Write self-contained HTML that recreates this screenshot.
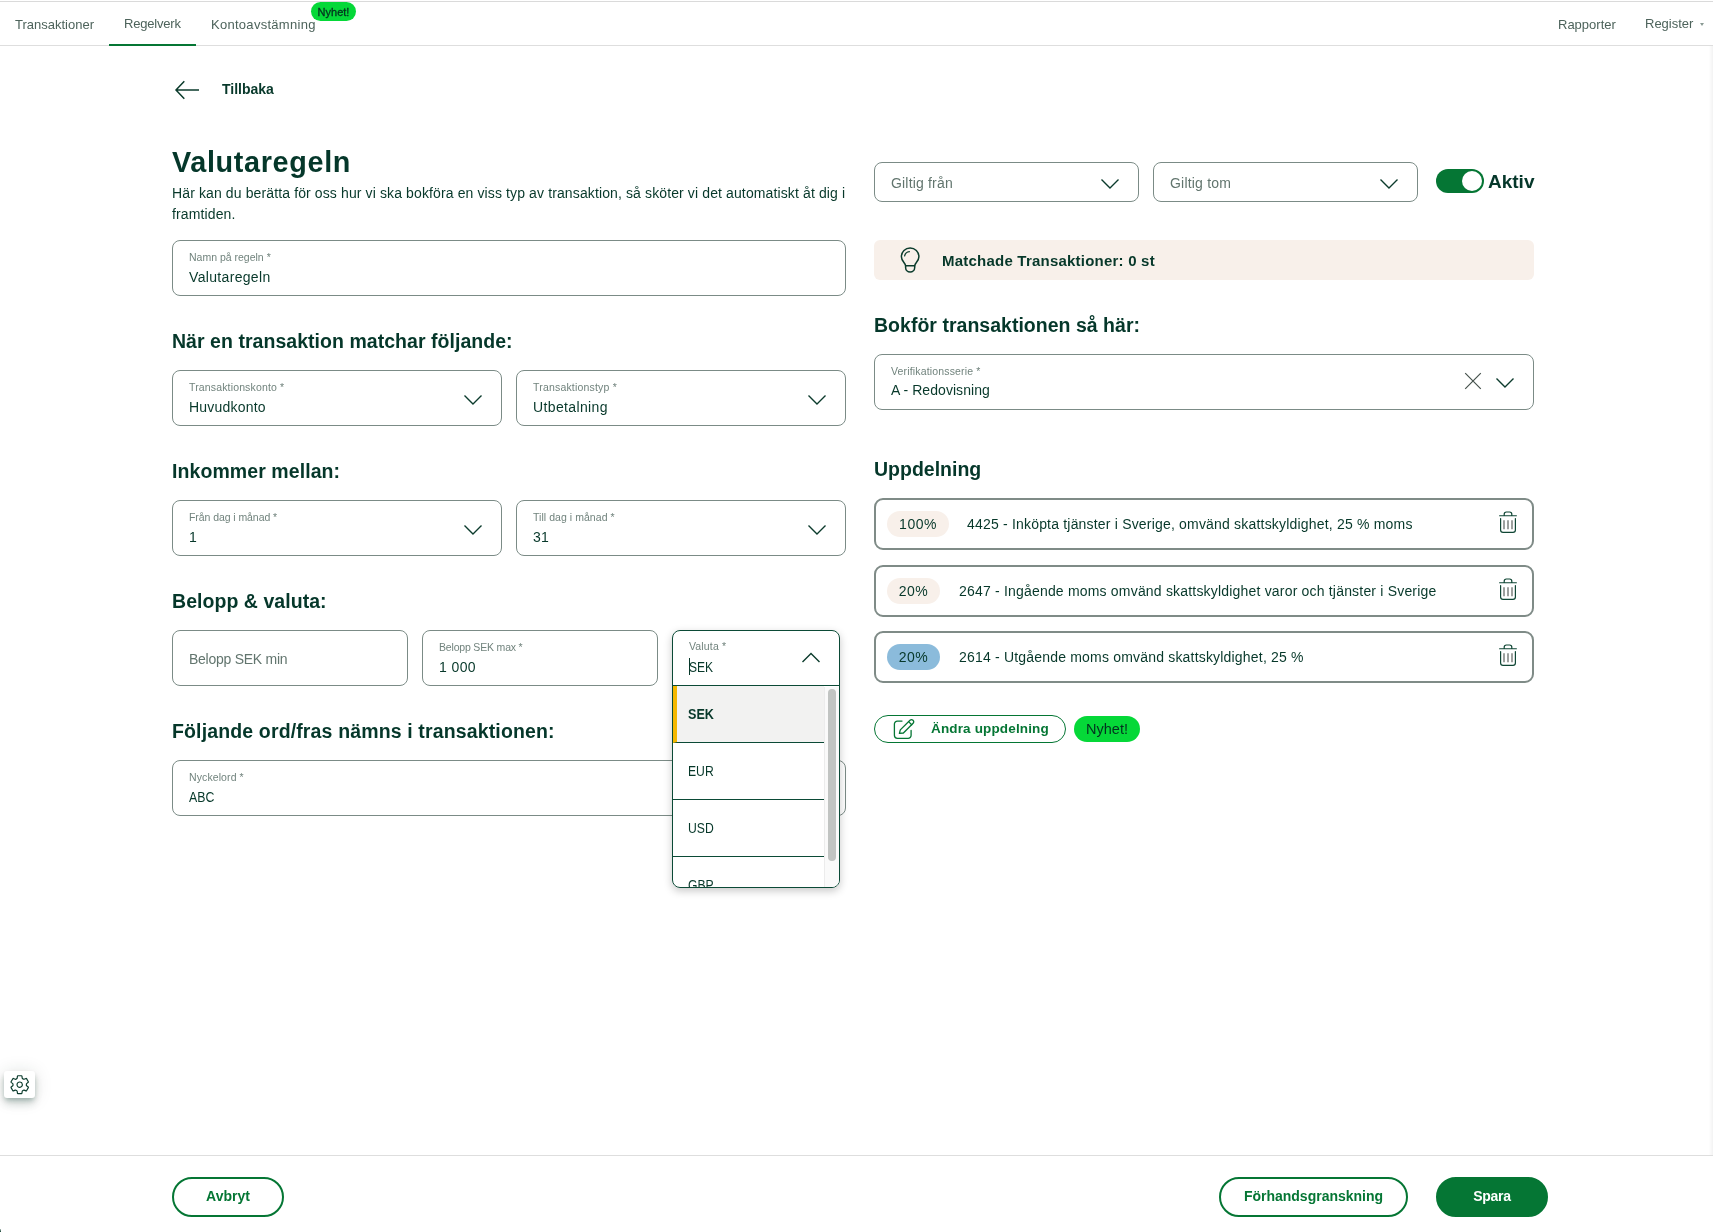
<!DOCTYPE html>
<html lang="sv">
<head>
<meta charset="utf-8">
<title>Valutaregeln</title>
<style>
*{box-sizing:border-box;margin:0;padding:0}
html,body{width:1713px;height:1232px;overflow:hidden;background:#fff}
body{position:relative;font-family:"Liberation Sans",sans-serif;color:#07382a;font-size:14px}
.abs{position:absolute;white-space:nowrap}
#topline{left:0;top:1px;width:1713px;height:1px;background:#dadada}
#nav{left:0;top:2px;width:1713px;height:44px;border-bottom:1px solid #dedede;background:#fff}
.tab{position:absolute;top:1px;height:44px;line-height:44px;font-size:13px;color:#4d635b;white-space:nowrap}
#tab2:after{content:"";position:absolute;left:-15px;right:-15px;bottom:0;height:2px;background:#057634}
.badge{position:absolute;background:#05d838;color:#07382a;text-align:center;white-space:nowrap}
h1{position:absolute;left:172px;top:145px;font-size:28.800px;line-height:34px;font-weight:bold;color:#05372a;white-space:nowrap;letter-spacing:.650px}
h2{position:absolute;font-size:19.500px;line-height:24px;font-weight:bold;color:#05372a;white-space:nowrap}
.field{position:absolute;height:56px;border:1px solid #7b8b86;border-radius:8px;background:#fff}
.field .lbl{position:absolute;left:16px;top:9.500px;font-size:10.500px;line-height:12px;color:#71837d;white-space:nowrap}
.field .val{position:absolute;left:16px;top:27px;font-size:14px;line-height:18px;color:#07382a;white-space:nowrap}
.field .ph{position:absolute;left:16px;top:19px;font-size:14px;line-height:18px;color:#62756e;white-space:nowrap}
.field svg.chev{position:absolute;right:19px;top:24px}
.field.small{height:40px}
.field.small .ph{top:11px}
.field.small svg.chev{top:16px;right:19px}
.field.ver svg.chev{top:23px}
.field.ver .val{top:26px}
.row{position:absolute;left:874px;width:660px;height:52px;border:2px solid #7f8b87;border-radius:9px;background:#fff}
.row .pct{position:absolute;left:11px;top:11px;height:26px;line-height:26px;border-radius:13px;background:#f8f0ea;font-size:14px;text-align:center;color:#07382a;letter-spacing:.500px}
.row .txt{position:absolute;top:15px;font-size:14px;line-height:18px;white-space:nowrap;color:#07382a;letter-spacing:.190px}
.row svg{position:absolute;left:623px;top:10.500px}
.btn{position:absolute;height:40px;border-radius:20px;border:2px solid #057634;color:#057634;font-weight:bold;font-size:14px;line-height:34px;text-align:center;background:#fff;white-space:nowrap}
.btn.fill{background:#057634;color:#fff}
</style>
</head>
<body>
<div id="page" style="position:absolute;left:0;top:0;width:1713px;height:1232px;will-change:transform">
<div id="topline" class="abs"></div>
<div id="nav" class="abs">
  <div class="tab" id="tab1" style="left:15px">Transaktioner</div>
  <div class="tab" id="tab2" style="left:124px;top:0;letter-spacing:-.200px">Regelverk</div>
  <div class="tab" id="tab3" style="left:211px;letter-spacing:.280px">Kontoavstämning</div>
  <div class="badge" id="navbadge" style="left:311px;top:0;width:45px;height:19px;line-height:21px;font-size:11px;border-radius:9.500px;color:#04301f;-webkit-text-stroke:.300px #04301f">Nyhet!</div>
  <div class="tab" id="tab4" style="left:1558px">Rapporter</div>
  <div class="tab" id="tab5" style="left:1645px;top:0">Register</div>
  <div class="abs" id="caret" style="left:1700px;top:21px;width:0;height:0;border-left:2px solid transparent;border-right:2px solid transparent;border-top:3px solid #8a9a94"></div>
</div>
<svg class="abs" id="backarrow" style="left:174px;top:80px" width="26" height="20" viewBox="0 0 26 20" fill="none" stroke="#0b3b2c" stroke-width="1.500"><path d="M10.300 1.200L2 10l8.300 8.800M2 10H25"/></svg>
<div class="abs" id="back" style="left:222px;top:80px;font-size:14px;line-height:18px;font-weight:bold;color:#07382a">Tillbaka</div>
<h1 id="title">Valutaregeln</h1>
<div class="abs" id="desc" style="left:172px;top:183px;width:690px;white-space:normal;font-size:14px;line-height:21px;color:#07382a;letter-spacing:.120px">Här kan du berätta för oss hur vi ska bokföra en viss typ av transaktion, så sköter vi det automatiskt åt dig i framtiden.</div>
<div class="field" id="f_name" style="left:172px;top:240px;width:674px"><span class="lbl" style="letter-spacing:0px">Namn på regeln *</span><span class="val" style="letter-spacing:0.33px">Valutaregeln</span></div>
<h2 id="h_match" style="left:172px;top:329px;letter-spacing:.040px">När en transaktion matchar följande:</h2>
<div class="field" id="f_konto" style="left:172px;top:370px;width:330px"><span class="lbl" style="letter-spacing:0.15px">Transaktionskonto *</span><span class="val" style="letter-spacing:0.2px">Huvudkonto</span><svg class="chev" width="18" height="11" viewBox="0 0 18 11" fill="none" stroke="#0b3b2c" stroke-width="1.4"><path d="M0.500 0.500L9 9l8.500-8.500"/></svg></div>
<div class="field" id="f_typ" style="left:516px;top:370px;width:330px"><span class="lbl" style="letter-spacing:0.19px">Transaktionstyp *</span><span class="val" style="letter-spacing:0.37px">Utbetalning</span><svg class="chev" width="18" height="11" viewBox="0 0 18 11" fill="none" stroke="#0b3b2c" stroke-width="1.4"><path d="M0.500 0.500L9 9l8.500-8.500"/></svg></div>
<h2 id="h_ink" style="left:172px;top:459px;letter-spacing:.080px">Inkommer mellan:</h2>
<div class="field" id="f_from" style="left:172px;top:500px;width:330px"><span class="lbl" style="letter-spacing:-0.07px">Från dag i månad *</span><span class="val" style="letter-spacing:0px">1</span><svg class="chev" width="18" height="11" viewBox="0 0 18 11" fill="none" stroke="#0b3b2c" stroke-width="1.4"><path d="M0.500 0.500L9 9l8.500-8.500"/></svg></div>
<div class="field" id="f_to" style="left:516px;top:500px;width:330px"><span class="lbl" style="letter-spacing:0.05px">Till dag i månad *</span><span class="val" style="letter-spacing:0.3px">31</span><svg class="chev" width="18" height="11" viewBox="0 0 18 11" fill="none" stroke="#0b3b2c" stroke-width="1.4"><path d="M0.500 0.500L9 9l8.500-8.500"/></svg></div>
<h2 id="h_bel" style="left:172px;top:589px;letter-spacing:.050px">Belopp &amp; valuta:</h2>
<div class="field" id="f_min" style="left:172px;top:630px;width:236px"><span class="ph" style="letter-spacing:-.260px">Belopp SEK min</span></div>
<div class="field" id="f_max" style="left:422px;top:630px;width:236px"><span class="lbl" style="letter-spacing:-0.18px">Belopp SEK max *</span><span class="val" style="letter-spacing:0.4px">1 000</span></div>
<h2 id="h_ord" style="left:172px;top:719px;letter-spacing:.140px">Följande ord/fras nämns i transaktionen:</h2>
<div class="field" id="f_key" style="left:172px;top:760px;width:674px"><span class="lbl" style="letter-spacing:0.1px">Nyckelord *</span><span class="val" style="letter-spacing:0px"><span style="display:inline-block;transform:scaleX(.880);transform-origin:0 50%">ABC</span></span></div>
<div class="abs" id="ddshadow" style="left:672px;top:630px;width:168px;height:258px;border-radius:8px;box-shadow:0 3px 8px rgba(0,0,0,.220)"></div>
<div class="abs" id="dd" style="left:672px;top:630px;width:168px;height:258px;border:1.500px solid #0b4a36;border-radius:8px;background:#fff;overflow:hidden">
  <span class="abs" style="left:16px;top:9px;font-size:10.500px;line-height:12px;color:#71837d;letter-spacing:.150px">Valuta *</span>
  <span class="abs" style="left:15.500px;top:27px;line-height:18px;color:#07382a;font-size:14px;transform:scaleX(.860);transform-origin:0 50%">SEK</span>
  <div class="abs" id="cursor" style="left:16px;top:27px;width:1px;height:17px;background:#07382a"></div>
  <svg class="abs" style="left:128.5px;top:20.5px" width="18" height="11" viewBox="0 0 18 11" fill="none" stroke="#0b3b2c" stroke-width="1.4"><path d="M0.500 10L9 1.500l8.500 8.500"/></svg>
  <div class="abs" id="ddline" style="left:0;top:53.500px;width:168px;height:1.200px;background:#0b4a36"></div>
  <div class="abs" id="opt1" style="left:0;top:55px;width:151px;height:57px;background:#f2f2f1;border-left:4px solid #f5b800;border-bottom:1.500px solid #0b4a36"><span class="abs" style="left:11px;top:19px;font-weight:bold;line-height:18px;font-size:14px;transform:scaleX(.900);transform-origin:0 50%">SEK</span></div>
  <div class="abs" id="opt2" style="left:0;top:112px;width:151px;height:57px;border-bottom:1.500px solid #0b4a36"><span class="abs" style="left:15px;top:19px;line-height:18px;font-size:14.500px;transform:scaleX(.840);transform-origin:0 50%">EUR</span></div>
  <div class="abs" id="opt3" style="left:0;top:169px;width:151px;height:57px;border-bottom:1.500px solid #0b4a36"><span class="abs" style="left:15px;top:19px;line-height:18px;font-size:14.500px;transform:scaleX(.840);transform-origin:0 50%">USD</span></div>
  <div class="abs" id="opt4" style="left:0;top:226px;width:151px;height:57px"><span class="abs" style="left:15px;top:19px;line-height:18px;font-size:14.500px;transform:scaleX(.840);transform-origin:0 50%">GBP</span></div>
  <div class="abs" id="sbtrack" style="left:151px;top:56px;width:16px;height:202px;background:#fafafa;border-left:1px solid #ececec"></div>
  <div class="abs" id="sbthumb" style="left:155px;top:58px;width:8px;height:172px;border-radius:4px;background:#c1c4c2"></div>
</div>
<div class="field small" id="f_gf" style="left:874px;top:162px;width:265px"><span class="ph" style="letter-spacing:.180px">Giltig från</span><svg class="chev" width="18" height="11" viewBox="0 0 18 11" fill="none" stroke="#0b3b2c" stroke-width="1.4"><path d="M0.500 0.500L9 9l8.500-8.500"/></svg></div>
<div class="field small" id="f_gt" style="left:1153px;top:162px;width:265px"><span class="ph" style="letter-spacing:.200px">Giltig tom</span><svg class="chev" width="18" height="11" viewBox="0 0 18 11" fill="none" stroke="#0b3b2c" stroke-width="1.4"><path d="M0.500 0.500L9 9l8.500-8.500"/></svg></div>
<div class="abs" id="toggle" style="left:1436px;top:169px;width:48px;height:24px;border-radius:12px;background:#057634"><div class="abs" style="left:26px;top:2px;width:20px;height:20px;border-radius:50%;background:#fff"></div></div>
<div class="abs" id="aktiv" style="left:1488px;top:170px;font-size:19px;line-height:24px;font-weight:bold;color:#05372a">Aktiv</div>
<div class="abs" id="matchbox" style="left:874px;top:240px;width:660px;height:40px;border-radius:6px;background:#f8f0ea"></div>
<svg class="abs" id="bulb" style="left:899px;top:246px" width="22" height="28" viewBox="0 0 22 28" fill="none" stroke="#0b3b2c" stroke-width="1.500" stroke-linecap="round" stroke-linejoin="round"><path d="M6.600 19.800C6.600 17 2.400 15.500 2.400 10.750A8.750 8.750 0 0 1 19.900 10.750C19.900 15.500 15.700 17 15.700 19.800Z"/><path d="M6.600 19.800V21.500a4.550 4.550 0 0 0 9.100 0V19.800"/><path d="M5.600 10A5.500 5.500 0 0 1 10.400 5.700" stroke-width="1.200"/></svg>
<div class="abs" id="matchtxt" style="left:942px;top:252px;font-size:15px;line-height:18px;font-weight:bold;color:#07382a;letter-spacing:.220px">Matchade Transaktioner: 0 st</div>
<h2 id="h_bok" style="left:874px;top:313px;letter-spacing:.020px">Bokför transaktionen så här:</h2>
<div class="field ver" id="f_ver" style="left:874px;top:354px;width:660px"><span class="lbl" style="letter-spacing:0.16px">Verifikationsserie *</span><span class="val" style="letter-spacing:0.05px">A - Redovisning</span><svg class="abs" style="left:589px;top:17px" width="18" height="18" viewBox="0 0 18 18" fill="none" stroke="#46524d" stroke-width="1.200"><path d="M1.200 1.200l15.600 15.600M16.800 1.200L1.200 16.800"/></svg><svg class="chev" width="18" height="11" viewBox="0 0 18 11" fill="none" stroke="#0b3b2c" stroke-width="1.4"><path d="M0.500 0.500L9 9l8.500-8.500"/></svg></div>
<h2 id="h_upp" style="left:874px;top:457px;letter-spacing:0">Uppdelning</h2>
<div class="row" id="row1" style="top:498px"><span class="pct" style="width:62px">100%</span><span class="txt" style="left:91px">4425 - Inköpta tjänster i Sverige, omvänd skattskyldighet, 25 % moms</span><svg width="18" height="23" viewBox="0 0 18 23" fill="none" stroke="#0f4634" stroke-width="1.2" stroke-linecap="round" stroke-linejoin="round"><path d="M0.600 4.750H17.400M5.200 4.750V3.200a2.200 2.200 0 0 1 2.200-2.200h3.200a2.200 2.200 0 0 1 2.200 2.200V4.750"/><path d="M1.600 7.600V19a2.400 2.400 0 0 0 2.400 2.400H14a2.400 2.400 0 0 0 2.400-2.400V7.600"/><path d="M5 9.300V18.200M9 9.300V18.200M13 9.300V18.200" stroke="#6a6e6c" stroke-width="1.300" stroke-linecap="butt"/></svg></div>
<div class="row" id="row2" style="top:565px"><span class="pct" style="width:53px">20%</span><span class="txt" style="left:83px">2647 - Ingående moms omvänd skattskyldighet varor och tjänster i Sverige</span><svg width="18" height="23" viewBox="0 0 18 23" fill="none" stroke="#0f4634" stroke-width="1.2" stroke-linecap="round" stroke-linejoin="round"><path d="M0.600 4.750H17.400M5.200 4.750V3.200a2.200 2.200 0 0 1 2.200-2.200h3.200a2.200 2.200 0 0 1 2.200 2.200V4.750"/><path d="M1.600 7.600V19a2.400 2.400 0 0 0 2.400 2.400H14a2.400 2.400 0 0 0 2.400-2.400V7.600"/><path d="M5 9.300V18.200M9 9.300V18.200M13 9.300V18.200" stroke="#6a6e6c" stroke-width="1.300" stroke-linecap="butt"/></svg></div>
<div class="row" id="row3" style="top:631px"><span class="pct" style="width:53px;background:#8bbbdb">20%</span><span class="txt" style="left:83px">2614 - Utgående moms omvänd skattskyldighet, 25 %</span><svg width="18" height="23" viewBox="0 0 18 23" fill="none" stroke="#0f4634" stroke-width="1.2" stroke-linecap="round" stroke-linejoin="round"><path d="M0.600 4.750H17.400M5.200 4.750V3.200a2.200 2.200 0 0 1 2.200-2.200h3.200a2.200 2.200 0 0 1 2.200 2.200V4.750"/><path d="M1.600 7.600V19a2.400 2.400 0 0 0 2.400 2.400H14a2.400 2.400 0 0 0 2.400-2.400V7.600"/><path d="M5 9.300V18.200M9 9.300V18.200M13 9.300V18.200" stroke="#6a6e6c" stroke-width="1.300" stroke-linecap="butt"/></svg></div>
<div class="abs" id="andra" style="left:874px;top:715px;width:192px;height:28px;border:1.200px solid #057634;border-radius:14px;background:#fff">
<svg class="abs" style="left:17.800px;top:.800px" width="22" height="24" viewBox="0 0 22 24" fill="none" stroke="#057634" stroke-width="1.300" stroke-linecap="round" stroke-linejoin="round"><path d="M9 4.100H4.400a3 3 0 0 0-3 3V18.300a3 3 0 0 0 3 3H15.100a3 3 0 0 0 3-3V13.500"/><path d="M6.400 16.400L7.300 12.900 17 3.200a2.200 2.200 0 0 1 3.100 3.100L10.400 16Z"/><path d="M15.600 4.600L18.700 7.700"/></svg>
<span class="abs" style="left:56px;top:4px;font-size:13.500px;line-height:18px;font-weight:bold;color:#057634;letter-spacing:.150px">Ändra uppdelning</span></div>
<div class="badge" id="nyhet2" style="left:1074px;top:716px;width:66px;height:26px;line-height:27px;font-size:14.500px;border-radius:13px;color:#04301f">Nyhet!</div>
<div class="abs" id="footline" style="left:0;top:1155px;width:1713px;height:1px;background:#dedede"></div>
<div class="btn" id="b_avbryt" style="left:172px;top:1177px;width:112px">Avbryt</div>
<div class="btn" id="b_prev" style="left:1219px;top:1177px;width:189px">Förhandsgranskning</div>
<div class="btn fill" id="b_spara" style="left:1436px;top:1177px;width:112px;letter-spacing:-.250px">Spara</div>
<div class="abs" id="gear" style="left:4px;top:1071px;width:31px;height:27px;border-radius:3px;background:#fff;box-shadow:0 3px 5px -1px rgba(7,56,42,.260),0 6px 10px 0 rgba(7,56,42,.160),0 1px 18px 0 rgba(7,56,42,.130)"><svg class="abs" style="left:4.900px;top:2.600px" width="21.400" height="21.400" viewBox="0 0 512 512" fill="none" stroke="#0b3b2c" stroke-width="28" stroke-linecap="round" stroke-linejoin="round"><path d="M262.290 192.310a64 64 0 1 0 57.400 57.400 64.130 64.130 0 0 0-57.400-57.400zM416.390 256a154.340 154.340 0 0 1-1.530 20.790l45.210 35.460a10.810 10.810 0 0 1 2.450 13.750l-42.770 74a10.810 10.810 0 0 1-13.140 4.590l-44.900-18.080a16.110 16.110 0 0 0-15.170 1.750A164.480 164.480 0 0 1 325 400.800a15.940 15.940 0 0 0-8.820 12.140l-6.730 47.890a11.080 11.080 0 0 1-10.680 9.170h-85.540a11.110 11.110 0 0 1-10.690-8.870l-6.720-47.820a16.070 16.070 0 0 0-9-12.220 155.300 155.300 0 0 1-21.460-12.570 16 16 0 0 0-15.110-1.710l-44.890 18.070a10.810 10.810 0 0 1-13.140-4.580l-42.770-74a10.800 10.800 0 0 1 2.450-13.750l38.210-30a16.050 16.050 0 0 0 6-14.080c-.360-4.170-.580-8.330-.580-12.500s.210-8.270.580-12.350a16 16 0 0 0-6.070-13.940l-38.190-30A10.810 10.810 0 0 1 49.480 186l42.770-74a10.810 10.810 0 0 1 13.140-4.590l44.900 18.080a16.110 16.110 0 0 0 15.170-1.750A164.480 164.480 0 0 1 187 111.200a15.940 15.940 0 0 0 8.820-12.140l6.730-47.890A11.080 11.080 0 0 1 213.230 42h85.540a11.110 11.110 0 0 1 10.690 8.870l6.720 47.820a16.070 16.070 0 0 0 9 12.220 155.300 155.300 0 0 1 21.460 12.570 16 16 0 0 0 15.110 1.710l44.890-18.070a10.810 10.810 0 0 1 13.140 4.580l42.770 74a10.800 10.800 0 0 1-2.450 13.750l-38.210 30a16.050 16.050 0 0 0-6.050 14.080c.330 4.140.550 8.300.550 12.470z"/></svg></div>
<div class="abs" id="cornermark" style="left:0;top:1229px;width:1px;height:3px;background:linear-gradient(to bottom,rgba(11,59,44,.300),#0b3b2c)"></div>
<div class="abs" id="rshadow" style="left:1709px;top:46px;width:4px;height:1109px;background:linear-gradient(to right,rgba(0,0,0,0),rgba(0,0,0,.050))"></div>
</div>
</body>
</html>
